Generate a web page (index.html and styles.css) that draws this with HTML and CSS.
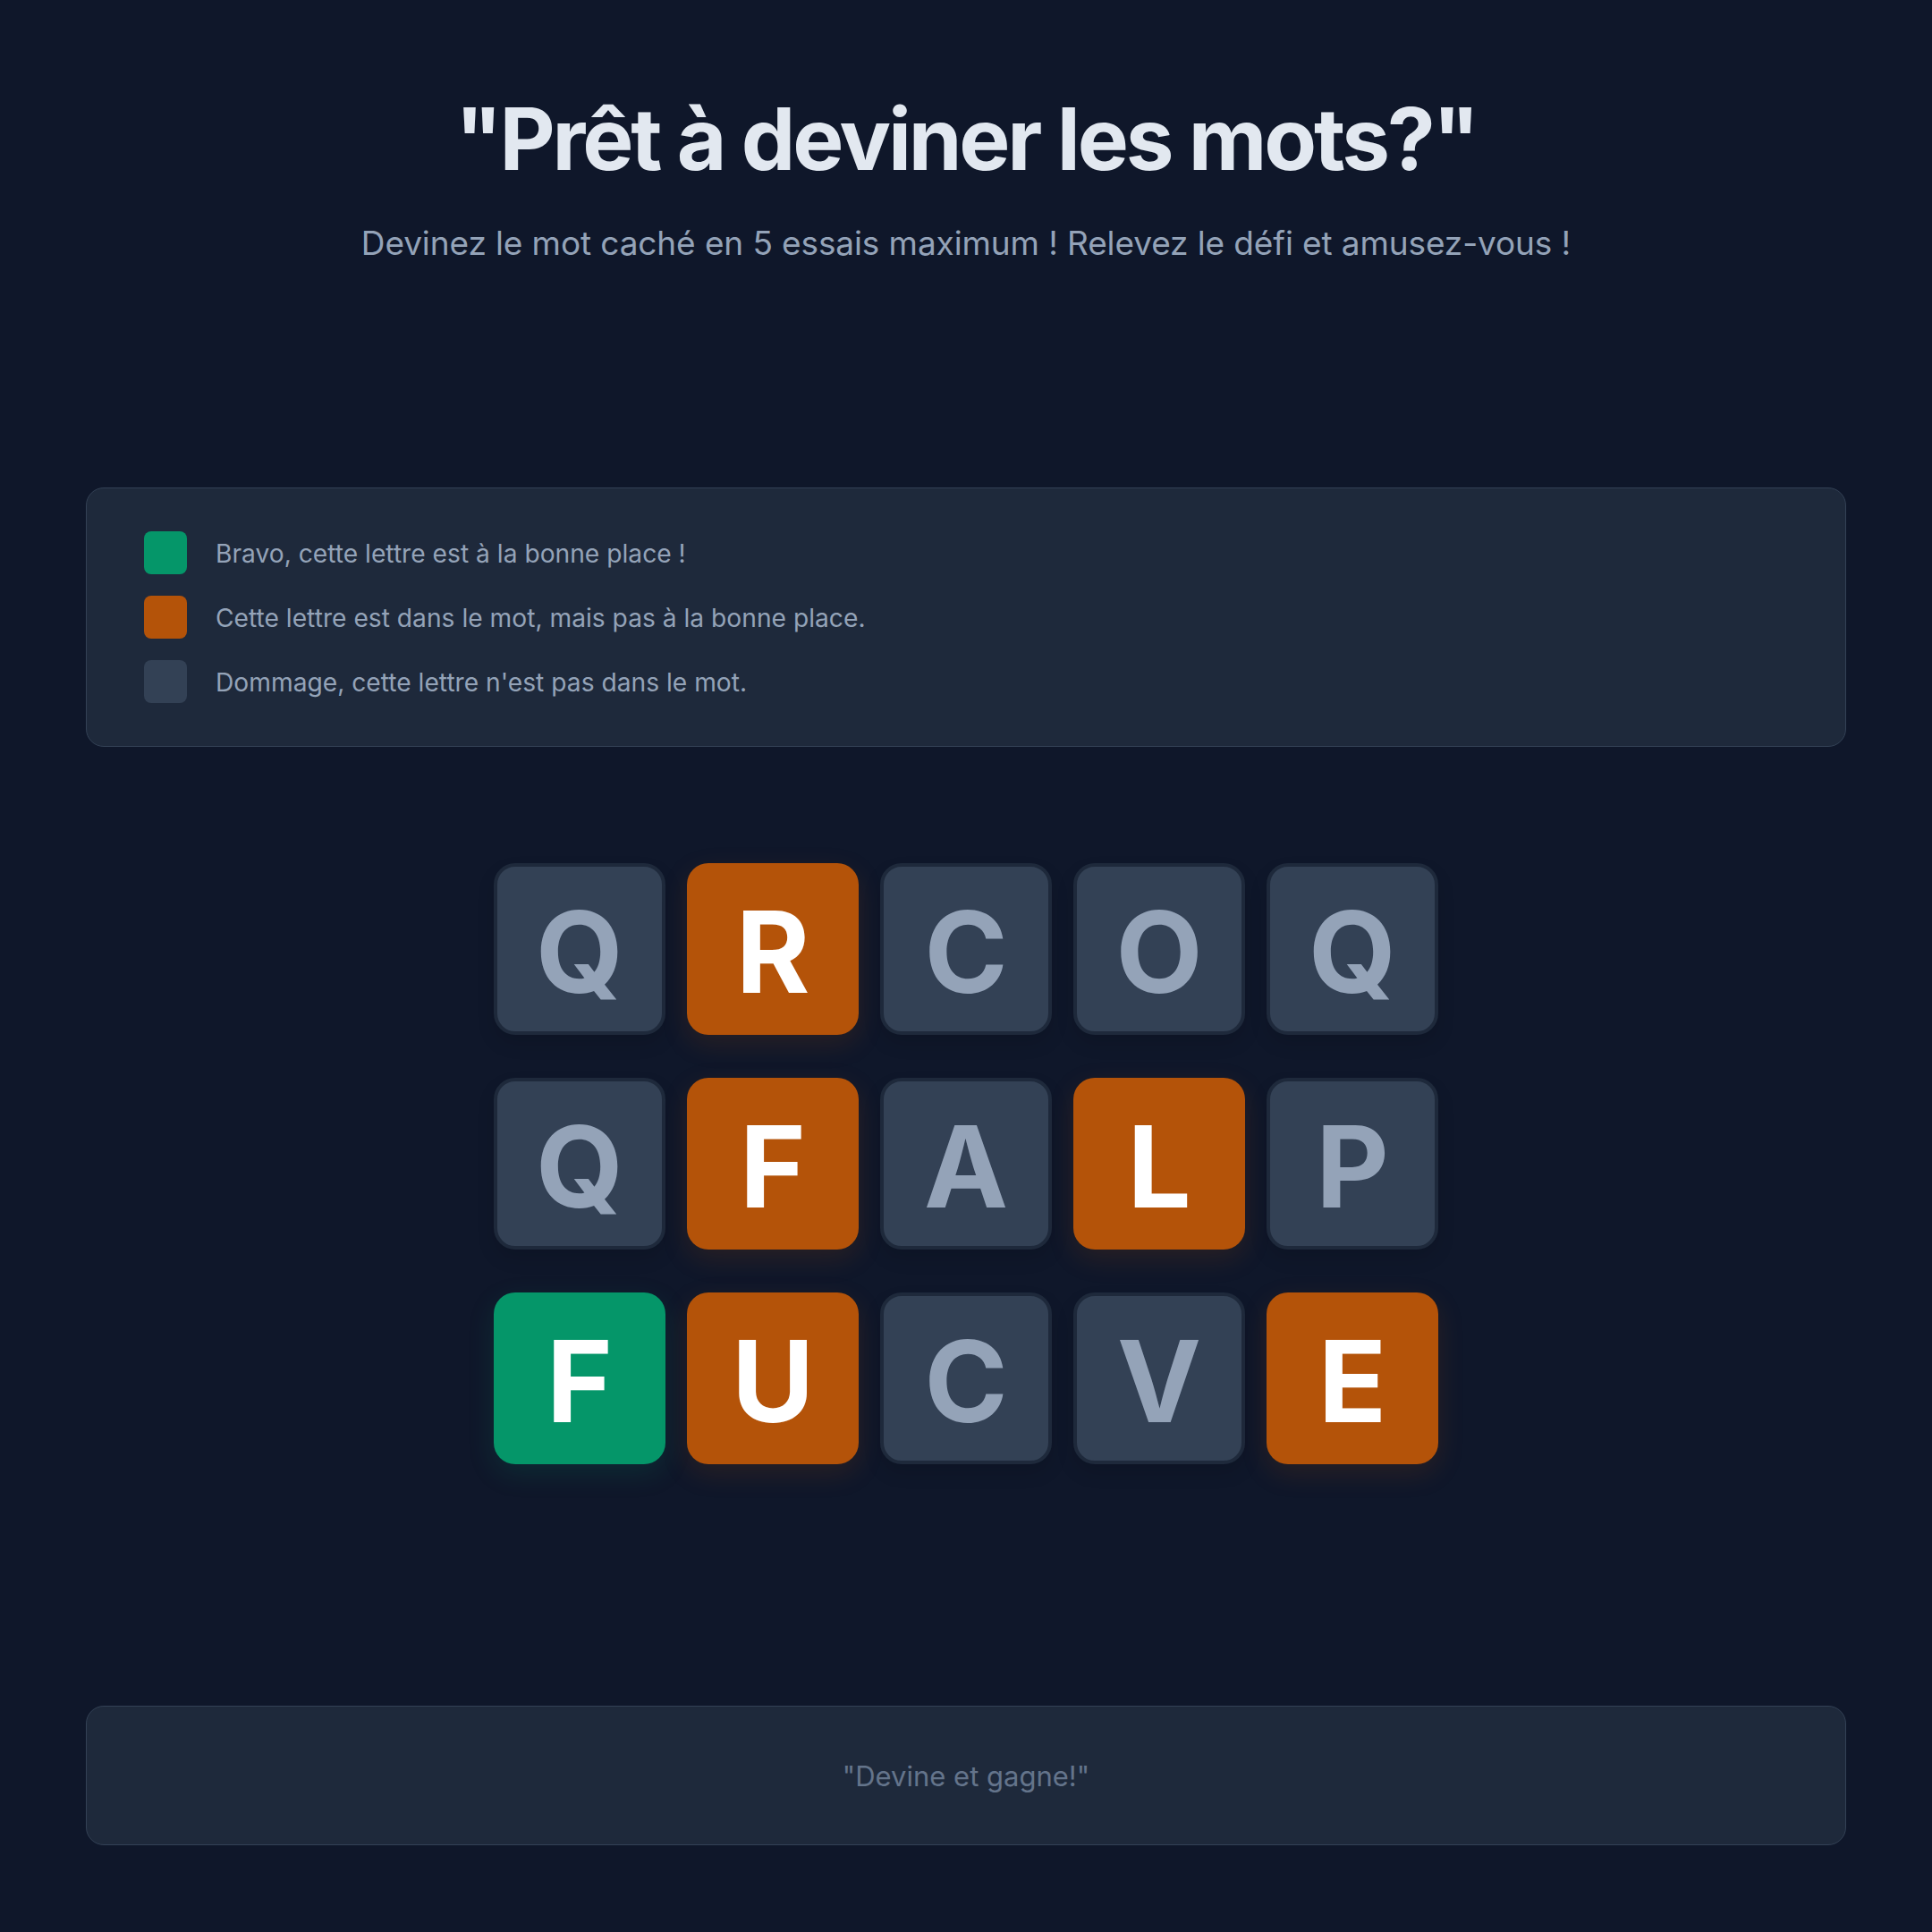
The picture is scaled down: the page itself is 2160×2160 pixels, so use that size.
FILE: index.html
```html
<!DOCTYPE html>
<html lang="fr">
<head>
<meta charset="utf-8">
<title>Prêt à deviner les mots?</title>
<link rel="stylesheet" href="styles.css">
</head>
<body>
<main class="page">
  <header class="header">
    <h1 class="title">"Prêt à deviner les mots?"</h1>
    <p class="subtitle">Devinez le mot caché en 5 essais maximum ! Relevez le défi et amusez-vous !</p>
  </header>

  <section class="legend">
    <div class="legend-row"><span class="swatch swatch-green"></span><span class="legend-text">Bravo, cette lettre est à la bonne place !</span></div>
    <div class="legend-row"><span class="swatch swatch-orange"></span><span class="legend-text">Cette lettre est dans le mot, mais pas à la bonne place.</span></div>
    <div class="legend-row"><span class="swatch swatch-gray"></span><span class="legend-text">Dommage, cette lettre n'est pas dans le mot.</span></div>
  </section>

  <section class="board">
    <div class="tile tile-absent">Q</div>
    <div class="tile tile-present">R</div>
    <div class="tile tile-absent">C</div>
    <div class="tile tile-absent">O</div>
    <div class="tile tile-absent">Q</div>

    <div class="tile tile-absent">Q</div>
    <div class="tile tile-present">F</div>
    <div class="tile tile-absent">A</div>
    <div class="tile tile-present">L</div>
    <div class="tile tile-absent">P</div>

    <div class="tile tile-correct">F</div>
    <div class="tile tile-present">U</div>
    <div class="tile tile-absent">C</div>
    <div class="tile tile-absent">V</div>
    <div class="tile tile-present">E</div>
  </section>

  <footer class="footer">
    <p class="footer-text">"Devine et gagne!"</p>
  </footer>
</main>
</body>
</html>
```

FILE: styles.css
```css
* {
  box-sizing: border-box;
}

html, body {
  margin: 0;
  padding: 0;
}

body {
  background: #0f172a;
  font-family: Inter, "Noto Sans", "Liberation Sans", sans-serif;
  color: #e2e8f0;
}

.page {
  display: flex;
  flex-direction: column;
  padding: 103px 96px 97px;
  min-height: 2160px;
}

.header {
  text-align: center;
}

.title {
  margin: 0;
  font-size: 96px;
  line-height: 1.1;
  font-weight: 700;
  letter-spacing: -0.033em;
  color: #e2e8f0;
}

.subtitle {
  margin: 35px 0 0;
  font-size: 37px;
  line-height: 1.5;
  letter-spacing: -0.003em;
  color: #94a3b8;
}

.legend {
  margin-top: 246px;
  background: #1e293b;
  border: 1px solid #334155;
  border-radius: 20px;
  padding: 48px 64px;
  display: flex;
  flex-direction: column;
  gap: 24px;
}

.legend-row {
  display: flex;
  align-items: center;
  gap: 32px;
}

.swatch {
  width: 48px;
  height: 48px;
  border-radius: 8px;
  flex: none;
}

.swatch-green { background: #059669; }
.swatch-orange { background: #b45309; }
.swatch-gray { background: #334155; }

.legend-text {
  font-size: 28.2px;
  line-height: 1.5;
  padding-top: 2px;
  color: #94a3b8;
}

.board {
  margin: 130px auto 0;
  display: grid;
  grid-template-columns: repeat(5, 192px);
  grid-auto-rows: 192px;
  column-gap: 24px;
  row-gap: 48px;
}

.tile {
  display: flex;
  align-items: center;
  justify-content: center;
  border-radius: 24px;
  font-size: 126px;
  font-weight: 700;
  line-height: 1;
  padding-top: 5px;
}

.tile-absent {
  background: #334155;
  border: 4px solid #1e293b;
  color: #94a3b8;
  box-shadow: 0 10px 20px rgba(0, 0, 0, 0.12);
}

.tile-present {
  background: #b45309;
  color: #ffffff;
  box-shadow: 0 10px 30px rgba(180, 83, 9, 0.16);
}

.tile-correct {
  background: #059669;
  color: #ffffff;
  box-shadow: 0 10px 30px rgba(5, 150, 105, 0.16);
}

.footer {
  margin-top: auto;
  background: #1e293b;
  border: 1px solid #334155;
  border-radius: 20px;
  padding: 54px 32px;
  text-align: center;
}

.footer-text {
  margin: 0;
  font-size: 31px;
  line-height: 45px;
  padding-top: 1px;
  color: #64748b;
}
```
